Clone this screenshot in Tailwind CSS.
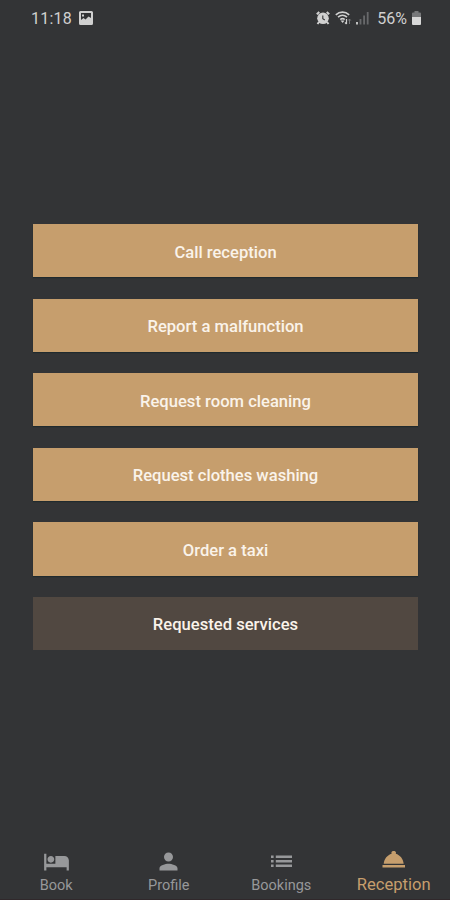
<!DOCTYPE html>
<html lang="en">
<head>
    <meta charset="UTF-8">
    <meta name="viewport" content="width=device-width, initial-scale=1.0">
    <title>Reception</title>
    <script src="https://cdn.jsdelivr.net/npm/@tailwindcss/browser@4"></script>
</head>
<body class="bg-[#333436] font-['Roboto',sans-serif] h-screen flex flex-col overflow-hidden">

    <!-- Status bar -->
    <header class="h-[37px] pl-[31px] pr-[29px] flex items-center justify-between text-[#d0d0d0] text-base">
        <div class="flex items-center gap-[7px]">
            <span class="tracking-[0.2px]">11:18</span>
            <svg class="w-[14px] h-[14px] mb-px" viewBox="0 0 14 14" fill="currentColor">
                <path fill-rule="evenodd" d="M1.5 0h11A1.5 1.5 0 0 1 14 1.5v11a1.5 1.5 0 0 1-1.5 1.5h-11A1.5 1.5 0 0 1 0 12.5v-11A1.5 1.5 0 0 1 1.5 0zM2 2v7l2.5-2 2 1.5L9.500 5.500 12 7V2zM3 3.500h2v2H3z" />
            </svg>
        </div>
        <div class="flex items-center">
            <svg class="w-[14px] h-[14px] mr-[5px] mb-px" viewBox="0 0 14 14" fill="none" stroke="currentColor">
                <circle cx="7" cy="7.300" r="5.800" fill="currentColor" stroke="none" />
                <path d="M.8 3.300 3.300 1M13.200 3.300 10.700 1M3 11l-1.500 2M11 11l1.500 2" stroke-width="2" />
                <path d="M6.800 4.500v3.200l2 1.300" stroke="#333436" stroke-width="1.100" />
            </svg>
            <svg class="w-[17px] h-[14px] mr-[4px] mb-px" viewBox="0 0 17 14" fill="none" stroke="currentColor">
                <path d="M.8 3.800c4-3.600 9.400-3.600 13.400 0M3 6.200c2.700-2.300 6.300-2.300 9 0M5.200 8.500c1.500-1.200 3.100-1.200 4.600 0" stroke-width="1.600" />
                <path d="M5.500 9.500h4L7.700 12z" fill="currentColor" stroke="none" />
                <path d="M11.500 8v5M10 11.500l1.500 1.500" stroke-width="1.200" />
                <path d="M14.500 13V8M13.300 9.500 14.500 8l1.200 1.500" stroke="#77787a" />
            </svg>
            <svg class="w-[13px] h-[14px] mr-[8px] mb-px" viewBox="0 0 13 14">
                <path d="M0 11h2v2.500H0z" fill="#c0c0c0" />
                <path d="M3.600 8h1.800v5.500H3.600zM7.200 4.500H9v9H7.200zM10.800 1h1.800v12.500h-1.800z" fill="#68696b" />
            </svg>
            <span class="mr-[5px]">56%</span>
            <svg class="w-[9px] h-[14px] mb-px" viewBox="0 0 9 14">
                <path d="M2.500 0h4v1.500H8A1 1 0 0 1 9 2.500V6H0V2.500a1 1 0 0 1 1-1h1.500z" fill="#77787a" />
                <path d="M0 6h9v7a1 1 0 0 1-1 1H1a1 1 0 0 1-1-1z" fill="#d8d8d8" />
            </svg>
        </div>
    </header>

    <!-- Services -->
    <main class="grow pt-[187px] pl-[33.300px] pr-[32.300px] flex flex-col gap-[21.300px] text-[16.600px] font-medium text-[#faf3ea]">
        <button class="h-[53.300px] pt-[5px] shrink-0 bg-[#c69e6d] shadow-[0_1px_1px_#202a2e]">Call reception</button>
        <button class="h-[53.300px] pt-[5px] shrink-0 bg-[#c69e6d] shadow-[0_1px_1px_#202a2e]">Report a malfunction</button>
        <button class="h-[53.300px] pt-[5px] shrink-0 bg-[#c69e6d] shadow-[0_1px_1px_#202a2e]">Request room cleaning</button>
        <button class="h-[53.300px] pt-[5px] shrink-0 bg-[#c69e6d] shadow-[0_1px_1px_#202a2e]">Request clothes washing</button>
        <button class="h-[53.300px] pt-[5px] shrink-0 bg-[#c69e6d] shadow-[0_1px_1px_#202a2e]">Order a taxi</button>
        <button class="h-[53.300px] pt-[4px] shrink-0 bg-[#514841]">Requested services</button>
    </main>

    <!-- Bottom tabs -->
    <nav class="h-[51px] shrink-0 grid grid-cols-4 text-[#97989a] text-[14.500px] leading-4">
        <a class="flex flex-col items-center">
            <svg class="w-[27px] h-[27px]" viewBox="0 0 24 24" fill="currentColor">
                <path d="M7 13c1.660 0 3-1.340 3-3S8.660 7 7 7s-3 1.340-3 3 1.340 3 3 3zm12-6h-8v7H3V5H1v15h2v-3h18v3h2v-9c0-2.210-1.790-4-4-4z" />
            </svg>
            <span class="mt-[3px]">Book</span>
        </a>
        <a class="flex flex-col items-center">
            <svg class="w-[27px] h-[27px]" viewBox="0 0 24 24" fill="currentColor">
                <path d="M12 12c2.210 0 4-1.790 4-4s-1.790-4-4-4-4 1.790-4 4 1.790 4 4 4zm0 2c-2.670 0-8 1.340-8 4v2h16v-2c0-2.660-5.330-4-8-4z" />
            </svg>
            <span class="mt-[3px]">Profile</span>
        </a>
        <a class="flex flex-col items-center">
            <svg class="w-[27px] h-[27px]" viewBox="0 0 27 27" fill="currentColor">
                <path d="M3 7.500h2.600v2.400H3zM3 12h2.600v2.400H3zM3 16.500h2.600v2.400H3zM7.800 7.500H24v2.400H7.800zM7.800 12H24v2.400H7.800zM7.800 16.500H24v2.400H7.800z" />
            </svg>
            <span class="mt-[3px]">Bookings</span>
        </a>
        <a class="flex flex-col items-center text-[16.600px] leading-4 text-[#c69e6d]">
            <svg class="w-[27px] h-[27px]" viewBox="0 0 27 27" fill="currentColor">
                <path d="M2.500 17h22.500v2.400H2.500zM11.400 4.800c0-1.200 1-1.800 2.300-1.800s2.300.6 2.300 1.800l-.2 1c4.200 1.300 7.400 5 7.900 10H3.700c.5-5 3.700-8.700 7.900-10z" />
            </svg>
            <span class="mt-[2px]">Reception</span>
        </a>
    </nav>
    <div class="h-px shrink-0 bg-[#30282b]"></div>

</body>
</html>
